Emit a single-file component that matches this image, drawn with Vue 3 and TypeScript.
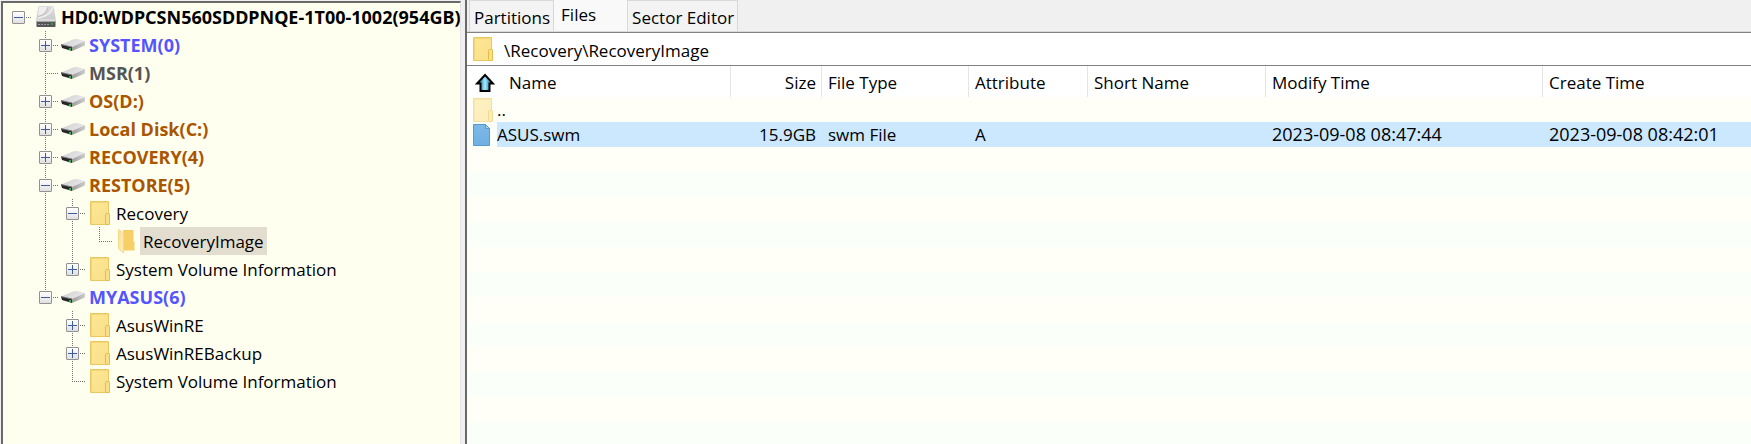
<script setup lang="ts">
import { ref } from 'vue'

type Icon = 'disk' | 'volume' | 'folder' | 'open'
type Guide = 'blank' | 'pass' | 'tee' | 'end' | 'single'

interface TreeRow {
  label: string
  icon: Icon
  guides: Guide[]
  toggle?: 'plus' | 'minus'
  tone?: 'root' | 'blue' | 'grey' | 'brown'
}

const tree: TreeRow[] = [
  { label: 'HD0:WDPCSN560SDDPNQE-1T00-1002(954GB)', icon: 'disk', guides: ['single'], toggle: 'minus', tone: 'root' },
  { label: 'SYSTEM(0)', icon: 'volume', guides: ['blank', 'tee'], toggle: 'plus', tone: 'blue' },
  { label: 'MSR(1)', icon: 'volume', guides: ['blank', 'tee'], tone: 'grey' },
  { label: 'OS(D:)', icon: 'volume', guides: ['blank', 'tee'], toggle: 'plus', tone: 'brown' },
  { label: 'Local Disk(C:)', icon: 'volume', guides: ['blank', 'tee'], toggle: 'plus', tone: 'brown' },
  { label: 'RECOVERY(4)', icon: 'volume', guides: ['blank', 'tee'], toggle: 'plus', tone: 'brown' },
  { label: 'RESTORE(5)', icon: 'volume', guides: ['blank', 'tee'], toggle: 'minus', tone: 'brown' },
  { label: 'Recovery', icon: 'folder', guides: ['blank', 'pass', 'tee'], toggle: 'minus' },
  { label: 'RecoveryImage', icon: 'open', guides: ['blank', 'pass', 'pass', 'end'] },
  { label: 'System Volume Information', icon: 'folder', guides: ['blank', 'pass', 'end'], toggle: 'plus' },
  { label: 'MYASUS(6)', icon: 'volume', guides: ['blank', 'end'], toggle: 'minus', tone: 'blue' },
  { label: 'AsusWinRE', icon: 'folder', guides: ['blank', 'blank', 'tee'], toggle: 'plus' },
  { label: 'AsusWinREBackup', icon: 'folder', guides: ['blank', 'blank', 'tee'], toggle: 'plus' },
  { label: 'System Volume Information', icon: 'folder', guides: ['blank', 'blank', 'end'] },
]

const selected = ref(8)
const tabs = ['Partitions', 'Files', 'Sector Editor']
const activeTab = ref('Files')
const path = ref('\\Recovery\\RecoveryImage')
</script>

<template>
  <div class="window">
    <svg class="defs" aria-hidden="true">
      <defs>
        <linearGradient id="g-case" x1="0" y1="0" x2="0" y2="1">
          <stop offset="0" stop-color="#dedede" /><stop offset="1" stop-color="#cacaca" />
        </linearGradient>
        <linearGradient id="g-top" x1="0" y1="0" x2="1" y2="0.4">
          <stop offset="0" stop-color="#cfcfd2" /><stop offset="1" stop-color="#e8e8ea" />
        </linearGradient>
        <linearGradient id="g-side" x1="0" y1="0" x2="1" y2="0">
          <stop offset="0" stop-color="#9c9c9c" /><stop offset="1" stop-color="#cecece" />
        </linearGradient>
        <linearGradient id="g-folder" x1="0" y1="0" x2="1" y2="1">
          <stop offset="0" stop-color="#fde693" /><stop offset="1" stop-color="#fadf8a" />
        </linearGradient>
        <linearGradient id="g-flap" x1="0" y1="0" x2="1" y2="1">
          <stop offset="0" stop-color="#f8dc96" /><stop offset="1" stop-color="#fff0c0" />
        </linearGradient>
        <linearGradient id="g-file" x1="0" y1="0" x2="0" y2="1">
          <stop offset="0" stop-color="#7db9e8" /><stop offset="1" stop-color="#6fb0e2" />
        </linearGradient>
        <linearGradient id="g-arrow" x1="0" y1="0" x2="1" y2="0">
          <stop offset="0.1" stop-color="#0b5f8c" /><stop offset="0.5" stop-color="#a8ecff" /><stop offset="0.9" stop-color="#0b6fa4" />
        </linearGradient>
        <symbol id="disk" viewBox="0 0 24 24">
          <path d="M4 2l1-1h14l1 1 2 14H2z" fill="url(#g-case)" />
          <path d="M5 2h8c-1 5-4 8-9 9z" fill="#efefef" />
          <path d="M19 2c-2 6-8 10-15 11" fill="none" stroke="#f0f0f0" stroke-width="1.500" />
          <path d="M14 2c-1 5-4 8-10 9.500" fill="none" stroke="#c0c0c0" />
          <rect x="2" y="14" width="20" height="8" rx="1" fill="#a8a8a8" />
          <rect x="2" y="14" width="20" height="2" fill="#dadada" />
          <rect x="3" y="17" width="18" height="5" fill="#555" />
          <path d="M4 19.500h2M7 19.500h2M10 19.500h2M13 19.500h2" stroke="#999" />
          <rect x="17" y="18" width="2" height="2" fill="#2a2" />
        </symbol>
        <symbol id="volume" viewBox="0 0 24 14">
          <path d="M0 6.500L12 1.500q2-.8 4-.5l8 2-13 6.500z" fill="url(#g-top)" />
          <path d="M11 9l13-6v4.500L11 13z" fill="url(#g-side)" />
          <path d="M0 6.500L11 9v4L1 10z" fill="#262626" />
          <path d="M0 6.500L11 9" stroke="#777" fill="none" />
          <rect x="8" y="10" width="2" height="2" fill="#1ebb2a" />
        </symbol>
        <symbol id="folder" viewBox="0 0 20 24">
          <path d="M.5.500h18V13h1v10.500H.5z" fill="url(#g-folder)" stroke="#e9c85f" />
          <path d="M1.500 23V1.500h16" fill="none" stroke="#f2d679" />
          <rect x="15.500" y="12.500" width="4" height="11" rx="1" fill="#f9df85" stroke="#e3bd4b" />
        </symbol>
        <symbol id="open" viewBox="0 0 20 24">
          <path d="M6 1h10.500v11l1 1v8.500H6z" fill="#f7cf68" />
          <path d="M1.500.500L6.500 4v20l-5-4z" fill="url(#g-flap)" stroke="#f5d98a" />
        </symbol>
        <symbol id="file" viewBox="0 0 18 22">
          <path d="M.5.500h12l4 4v17H.5z" fill="url(#g-file)" stroke="#5b9bcb" />
          <path d="M12.500.500v4h4z" fill="#a8d1f0" stroke="#5b9bcb" />
        </symbol>
        <symbol id="arrow" viewBox="0 0 20 20">
          <path d="M10 2L18 10.500h-3.500V18h-9v-7.500H2z" fill="url(#g-arrow)" stroke="#000" stroke-width="2" />
        </symbol>
      </defs>
    </svg>

    <nav class="tree" aria-label="Disks">
      <ul>
        <li v-for="(row, i) in tree" :key="i">
          <span v-for="(g, d) in row.guides" :key="d" class="cell" :class="g">
            <button v-if="row.toggle && d === row.guides.length - 1" class="toggle" :class="row.toggle" :aria-label="'Toggle ' + row.label"></button>
          </span>
          <span class="slot"><svg :class="row.icon"><use :href="'#' + row.icon" /></svg></span>
          <button class="label" :class="[row.tone, { selected: selected === i }]" @click="selected = i">{{ row.label }}</button>
        </li>
      </ul>
    </nav>

    <main>
      <div class="tabs" role="tablist">
        <button v-for="t in tabs" :key="t" role="tab" :aria-selected="t === activeTab" :class="{ active: t === activeTab }" @click="activeTab = t">{{ t }}</button>
      </div>
      <div class="path">
        <svg class="folder"><use href="#folder" /></svg>
        <input v-model="path" type="text" aria-label="Path" />
      </div>
      <div class="list">
        <table>
          <colgroup>
            <col class="c-name" /><col class="c-size" /><col class="c-type" /><col class="c-attr" /><col class="c-short" /><col class="c-mod" /><col />
          </colgroup>
          <thead>
            <tr>
              <th><span class="sort"><svg class="arrow"><use href="#arrow" /></svg>Name</span></th>
              <th class="num">Size</th>
              <th>File Type</th>
              <th>Attribute</th>
              <th>Short Name</th>
              <th>Modify Time</th>
              <th>Create Time</th>
            </tr>
          </thead>
          <tbody>
            <tr>
              <td class="name"><span class="entry"><svg class="folder faded"><use href="#folder" /></svg><span class="text">..</span></span></td>
              <td></td><td></td><td></td><td></td><td></td><td></td>
            </tr>
            <tr class="current">
              <td class="name"><span class="entry"><svg class="file"><use href="#file" /></svg><span class="text">ASUS.swm</span></span></td>
              <td class="num">15.9GB</td>
              <td>swm File</td>
              <td>A</td>
              <td></td>
              <td class="date">2023-09-08 08:47:44</td>
              <td class="date">2023-09-08 08:42:01</td>
            </tr>
          </tbody>
        </table>
      </div>
    </main>
  </div>
</template>

<style>
body {
  background: #f0f0f0;
}
</style>

<style scoped>
.window {
  display: flex;
  height: 100vh;
  overflow: hidden;
  font: 17px/24px "Open Sans", "Noto Sans", sans-serif;
  color: #000;
}
.defs {
  position: absolute;
  width: 0;
  height: 0;
}
button, input {
  font: inherit;
  color: inherit;
  border: 0;
  margin: 0;
  padding: 0;
  background: none;
}
svg {
  display: block;
  flex: none;
}
.tree {
  flex: none;
  box-sizing: border-box;
  width: 460px;
  margin: 1px 0 0 1px;
  border: solid #696969;
  border-width: 2px 0 0 2px;
  border-right: 1px solid #e3e3e3;
  background: #fffff0;
  overflow: hidden;
}
ul {
  list-style: none;
  margin: 0;
  padding: 0 0 0 2px;
}
li {
  display: flex;
  align-items: center;
  height: 28px;
  white-space: nowrap;
}
.cell {
  --dots-v: repeating-linear-gradient(to bottom, #707070 0 1px, transparent 1px 2px);
  --dots-h: repeating-linear-gradient(to right, #707070 0 1px, transparent 1px 2px);
  flex: none;
  display: flex;
  align-items: center;
  justify-content: center;
  width: 27px;
  height: 28px;
  background-repeat: no-repeat;
}
.pass {
  background-image: var(--dots-v);
  background-size: 1px 100%;
  background-position: 13px 0;
}
.tee {
  background-image: var(--dots-v), var(--dots-h);
  background-size: 1px 100%, 14px 1px;
  background-position: 13px 0, 13px 14px;
}
.end {
  background-image: var(--dots-v), var(--dots-h);
  background-size: 1px 14px, 14px 1px;
  background-position: 13px 0, 13px 14px;
}
.single {
  background-image: var(--dots-h);
  background-size: 14px 1px;
  background-position: 13px 14px;
}
.toggle {
  width: 13px;
  height: 13px;
  border: 1px solid #919191;
  border-radius: 1px;
  background:
    linear-gradient(#3c5aa0, #3c5aa0) center / 9px 1px no-repeat,
    linear-gradient(#fff, #e0e0e0);
}
.toggle.plus {
  background:
    linear-gradient(#3c5aa0, #3c5aa0) center / 9px 1px no-repeat,
    linear-gradient(#3c5aa0, #3c5aa0) center / 1px 9px no-repeat,
    linear-gradient(#fff, #e0e0e0);
}
.slot {
  flex: none;
  display: flex;
  justify-content: center;
  width: 27px;
}
.disk { width: 24px; height: 24px; }
.volume { width: 24px; height: 14px; }
.folder, .open { width: 20px; height: 24px; }
.file { width: 18px; height: 22px; }
.arrow { width: 20px; height: 20px; }
.label {
  height: 28px;
  padding: 2px 3px 0;
}
.root, .blue, .grey, .brown {
  padding-top: 0;
  font-size: 18px;
  font-weight: 700;
}
.root {
  padding-left: 2px;
  font-family: "Noto Sans", sans-serif;
}
.blue { color: #55f; }
.grey { color: #555; }
.brown { color: #a50; }
.selected { background: #e3ddd0; }
main {
  flex: 1;
  min-width: 0;
  display: flex;
  flex-direction: column;
  margin-left: 4px;
  border-left: 2px solid #696969;
}
.tabs {
  flex: none;
  display: flex;
  height: 31px;
  padding-left: 2px;
  border-bottom: 1px solid #d9d9d9;
}
.tabs button {
  padding: 3px 3px 0 4px;
  border: 1px solid #d9d9d9;
  border-bottom: 0;
  background: #f3f3f3;
}
.tabs button.active {
  padding: 0 31px 2px 7px;
  border: 0;
  background: #f9f9f9;
}
.path {
  flex: none;
  display: flex;
  align-items: center;
  height: 32px;
  padding-left: 6px;
  border: solid #828282;
  border-width: 1px 0;
  background: #fff;
}
.path input {
  flex: 1;
  min-width: 0;
  padding: 3px 11px 0;
  outline: 0;
}
.list {
  flex: 1;
  overflow: hidden;
  background: repeating-linear-gradient(to bottom, #fffff8 0 25px, #fafffa 25px 50px) 0 31px;
}
table {
  width: 100%;
  table-layout: fixed;
  border-collapse: separate;
  border-spacing: 0;
}
.c-name { width: 264px; }
.c-size { width: 91px; }
.c-type { width: 147px; }
.c-attr { width: 119px; }
.c-short { width: 178px; }
.c-mod { width: 277px; }
th, td {
  padding: 0 6px;
  text-align: left;
  font-weight: 400;
  white-space: nowrap;
}
th {
  box-sizing: border-box;
  height: 31px;
  border-right: 1px solid #e5e5e5;
  background: #fff;
  padding: 2px 5px 0 6px;
}
th:last-child { border-right: 0; }
.num { text-align: right; }
td {
  box-sizing: border-box;
  height: 25px;
  line-height: 25px;
}
.date { font-size: 18px; }
td.name { padding: 0; }
.sort {
  display: flex;
  align-items: center;
  gap: 14px;
  margin-left: 2px;
}
.entry {
  display: flex;
  align-items: center;
  height: 25px;
  padding-left: 6px;
}
.entry .text {
  flex: 1;
  margin-left: 4px;
}
.entry .file + .text { margin-left: 6px; }
.faded { opacity: 0.55; }
.current td { background: #cce8ff; }
.current td.name { background: none; }
.current .text { background: #cce8ff; }
</style>
